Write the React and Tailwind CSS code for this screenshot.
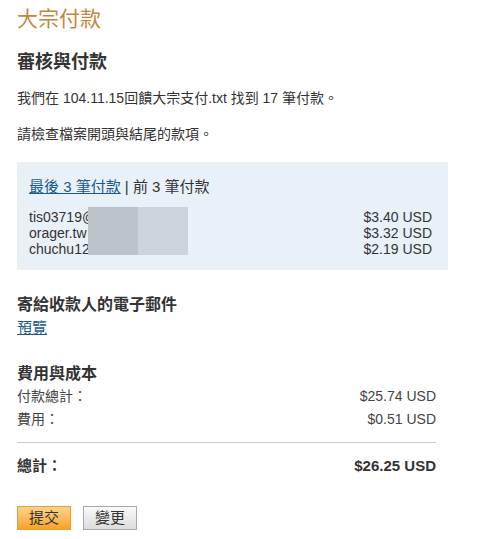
const font = { fontFamily: '"Liberation Sans", Arial, "Noto Sans CJK TC", sans-serif' };

const Row = ({ label, value, bold }) => (
  <div className={`flex justify-between ${bold ? "font-bold text-[15px] text-[#333]" : "text-[14px] text-[#444]"}`}>
    <span>{label}</span>
    <span>{value}</span>
  </div>
);

export default function App() {
  return (
    <div className="w-[492px] h-[539px] bg-white text-[#333] pl-[17px] pt-[6px]" style={font}>
      <h1 className="text-[21px] leading-[26px] text-[#c1873f]">大宗付款</h1>

      <h2 className="mt-[19px] text-[18px] leading-[22px] font-bold text-[#333]">審核與付款</h2>

      <p className="mt-[16px] text-[14px] leading-[18px]">我們在 104.11.15回饋大宗支付.txt 找到 17 筆付款。</p>
      <p className="mt-[18px] text-[14px] leading-[18px]">請檢查檔案開頭與結尾的款項。</p>

      <div className="mt-[19px] w-[431px] h-[108px] bg-[#e8f0f8] pt-[16px] pl-[12px] pr-[16px]">
        <div className="text-[15px] leading-[18px]">
          <a href="#" className="text-[#1d5a8e] underline">最後 3 筆付款</a>
          <span className="text-[#333]"> | 前 3 筆付款</span>
        </div>
        <div className="mt-[13px] relative">
          <div className="flex text-[14px] leading-[16px] text-[#333]">
            <div className="flex-1 flex flex-col">
              <span>tis03719@</span>
              <span>orager.tw</span>
              <span>chuchu12</span>
            </div>
            <div className="flex flex-col items-end">
              <span>$3.40 USD</span>
              <span>$3.32 USD</span>
              <span>$2.19 USD</span>
            </div>
          </div>
          <div className="absolute left-[59px] top-[-2px] flex h-[48px]">
            <div className="w-[50px] bg-[#bcc3c9]"></div>
            <div className="w-[50px] bg-[#cdd4da]"></div>
          </div>
        </div>
      </div>

      <h3 className="mt-[25px] text-[16px] leading-[20px] font-bold">寄給收款人的電子郵件</h3>
      <a href="#" className="block mt-[3px] text-[15px] leading-[20px] text-[#1d5a8e] underline w-fit">預覽</a>

      <div className="w-[419px]">
        <h3 className="mt-[26px] text-[16px] leading-[20px] font-bold">費用與成本</h3>
        <div className="mt-[2px] flex flex-col gap-[3px] leading-[20px]">
          <Row label="付款總計：" value="$25.74 USD" />
          <Row label="費用：" value="$0.51 USD" />
        </div>
        <div className="mt-[13px] border-t border-[#cccccc]"></div>
        <div className="mt-[13px] leading-[20px]">
          <Row label="總計：" value="$26.25 USD" bold />
        </div>
      </div>

      <div className="mt-[30px] flex gap-[12px]">
        <button className="w-[54px] h-[24px] text-[15px] text-[#333] border border-[#e0a040] bg-gradient-to-b from-[#fcd38a] to-[#f7a21e]">提交</button>
        <button className="w-[54px] h-[24px] text-[15px] text-[#333] border border-[#a8a8a8] bg-gradient-to-b from-[#fafafa] to-[#dcdcdc]">變更</button>
      </div>
    </div>
  );
}
